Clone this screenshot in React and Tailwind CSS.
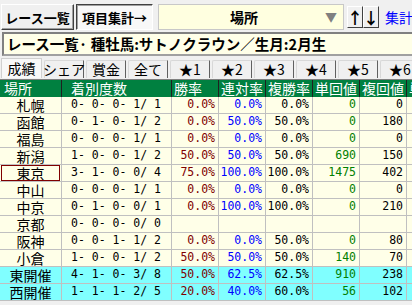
import React from 'react';

const jp = { fontFamily: '"Noto Sans CJK JP", sans-serif' };
const mono = { fontFamily: '"DejaVu Sans Mono", "Noto Sans CJK JP", monospace' };

const rows = [
    { place: '札幌', rec: '0- 0- 0- 1/ 1', win: '0.0%', ren: '0.0%', fuku: '0.0%', tan: '0', fkv: '0' },
    { place: '函館', rec: '0- 1- 0- 1/ 2', win: '0.0%', ren: '50.0%', fuku: '50.0%', tan: '0', fkv: '180' },
    { place: '福島', rec: '0- 0- 0- 1/ 1', win: '0.0%', ren: '0.0%', fuku: '0.0%', tan: '0', fkv: '0' },
    { place: '新潟', rec: '1- 0- 0- 1/ 2', win: '50.0%', ren: '50.0%', fuku: '50.0%', tan: '690', fkv: '150' },
    { place: '東京', rec: '3- 1- 0- 0/ 4', win: '75.0%', ren: '100.0%', fuku: '100.0%', tan: '1475', fkv: '402', focus: true },
    { place: '中山', rec: '0- 0- 0- 1/ 1', win: '0.0%', ren: '0.0%', fuku: '0.0%', tan: '0', fkv: '0' },
    { place: '中京', rec: '0- 1- 0- 0/ 1', win: '0.0%', ren: '100.0%', fuku: '100.0%', tan: '0', fkv: '210' },
    { place: '京都', rec: '0- 0- 0- 0/ 0', win: '', ren: '', fuku: '', tan: '', fkv: '' },
    { place: '阪神', rec: '0- 0- 1- 1/ 2', win: '0.0%', ren: '0.0%', fuku: '50.0%', tan: '0', fkv: '80' },
    { place: '小倉', rec: '1- 0- 0- 1/ 2', win: '50.0%', ren: '50.0%', fuku: '50.0%', tan: '140', fkv: '70' },
    { place: '東開催', rec: '4- 1- 0- 3/ 8', win: '50.0%', ren: '62.5%', fuku: '62.5%', tan: '910', fkv: '238', cyan: true },
    { place: '西開催', rec: '1- 1- 1- 2/ 5', win: '20.0%', ren: '40.0%', fuku: '60.0%', tan: '56', fkv: '102', cyan: true },
];

const tabs = ['成績', 'シェア', '賞金', '全て', '★1', '★2', '★3', '★4', '★5', '★6'];
const heads = ['勝率', '連対率', '複勝率', '単回値', '複回値'];

export default function App() {
    return (
        <div className="w-[412px] h-[305px] overflow-hidden bg-[#f0f0f0] text-black" style={jp}>
            {/* toolbar */}
            <div className="flex items-center h-[26px] mt-[4px] pl-[1px] whitespace-nowrap">
                <div className="shrink-0 w-[73px] h-[26px] flex items-center justify-center bg-[#f0f0f0] border border-t-white border-l-white border-r-[#404040] border-b-[#404040] shadow-[inset_-1px_-1px_0_#a0a0a0] text-[13px] font-bold leading-none">
                    レース一覧
                </div>
                <div className="shrink-0 ml-[2px] w-[77px] h-[26px] flex items-center justify-center bg-[#f8f8f8] border border-t-[#404040] border-l-[#404040] border-r-white border-b-white shadow-[inset_1px_1px_0_#a0a0a0] text-[13px] font-bold leading-none">
                    項目集計→
                </div>
                <div className="shrink-0 ml-[5px] w-[186px] h-[26px] flex items-center bg-[#ffffe0] border border-[#c8c8c8]">
                    <span className="flex-1 text-center text-[14px] font-bold leading-none pl-[4px]">場所</span>
                    <span className="w-[18px] text-[#808080] text-[12px] leading-none">▼</span>
                </div>
                <div className="shrink-0 ml-[3px] w-[16px] h-[22px] flex items-center justify-center bg-[#f0f0f0] border border-t-white border-l-white border-r-[#404040] border-b-[#404040] text-[16px] font-bold leading-none">↑</div>
                <div className="shrink-0 w-[16px] h-[22px] flex items-center justify-center bg-[#f0f0f0] border border-t-white border-l-white border-r-[#404040] border-b-[#404040] text-[16px] font-bold leading-none">↓</div>
                <span className="shrink-0 ml-[6px] text-[#0000ff] text-[14px] leading-none">集計→</span>
            </div>

            {/* title */}
            <div className="mt-[2px] ml-[2px] h-[24px] flex items-center bg-[#ffffe8] border-t-2 border-l-2 border-t-[#808080] border-l-[#808080] border-b-2 border-b-[#a0a0a0] pl-[3px] whitespace-nowrap">
                <span className="text-[14.5px] font-bold leading-none">レース一覧· 種牡馬:サトノクラウン／生月:2月生</span>
            </div>

            {/* tabs */}
            <div className="mt-[2px] h-[20px] flex items-end pl-[1px] whitespace-nowrap">
                {tabs.map((t, i) => (
                    <div
                        key={t}
                        className={
                            i === 0
                                ? 'shrink-0 w-[41px] h-[20px] flex items-center justify-center pb-[1px] bg-[#f8f8f8] border border-b-0 border-[#d0d0d0] text-[14px] leading-none'
                                : 'shrink-0 ml-[2px] w-[40px] h-[18px] flex items-center justify-center pb-[1px] bg-[#f0f0f0] border border-b-0 border-l-[#d8d8d8] border-t-[#d8d8d8] border-r-[#606060] rounded-tl-[2px] text-[14px] leading-none'
                        }
                    >
                        {t}
                    </div>
                ))}
            </div>

            {/* table */}
            <div className="mt-[1px] w-[460px] border-t border-[#808080]">
                <div className="flex h-[17px] bg-[#008040] text-white text-[14px] leading-none whitespace-nowrap">
                    <div className="w-[62px] flex items-center pl-[4px] pb-[1px] border-r border-[#202020]">場所</div>
                    <div className="w-[110px] flex items-center pl-[9px] pb-[1px] border-r border-[#202020]">着別度数</div>
                    {heads.map((h) => (
                        <div key={h} className="w-[47px] flex items-center pl-[2px] pb-[1px] border-r border-[#202020]">{h}</div>
                    ))}
                    <div className="w-[47px] flex items-center pl-[2px] pb-[1px]">単勝</div>
                </div>
                {rows.map((r) => (
                    <div
                        key={r.place}
                        className={`flex h-[17px] border-b border-[#c0c0c0] ${r.cyan ? 'bg-[#80ffff]' : 'bg-[#ffffe8]'}`}
                    >
                        <div className="w-[62px] flex items-center justify-center pb-[1px] border-r border-[#c0c0c0] text-[14px] leading-none relative">
                            {r.focus && <div className="absolute inset-x-[1px] inset-y-0 border border-[#800000]" />}
                            {r.place}
                        </div>
                        <div className="w-[110px] flex items-center pl-[9px] border-r border-[#c0c0c0] text-[11.5px] leading-none whitespace-pre" style={mono}>{r.rec}</div>
                        <div className="w-[47px] flex items-center justify-end pr-[3px] border-r border-[#c0c0c0] text-[11.5px] leading-none text-[#800000]" style={mono}>{r.win}</div>
                        <div className="w-[47px] flex items-center justify-end pr-[3px] border-r border-[#c0c0c0] text-[11.5px] leading-none text-[#0000ff]" style={mono}>{r.ren}</div>
                        <div className="w-[47px] flex items-center justify-end pr-[3px] border-r border-[#c0c0c0] text-[11.5px] leading-none" style={mono}>{r.fuku}</div>
                        <div className="w-[47px] flex items-center justify-end pr-[3px] border-r border-[#c0c0c0] text-[11.5px] leading-none text-[#008000]" style={mono}>{r.tan}</div>
                        <div className="w-[47px] flex items-center justify-end pr-[3px] border-r border-[#c0c0c0] text-[11.5px] leading-none" style={mono}>{r.fkv}</div>
                        <div className="w-[47px]" />
                    </div>
                ))}
            </div>
        </div>
    );
}
